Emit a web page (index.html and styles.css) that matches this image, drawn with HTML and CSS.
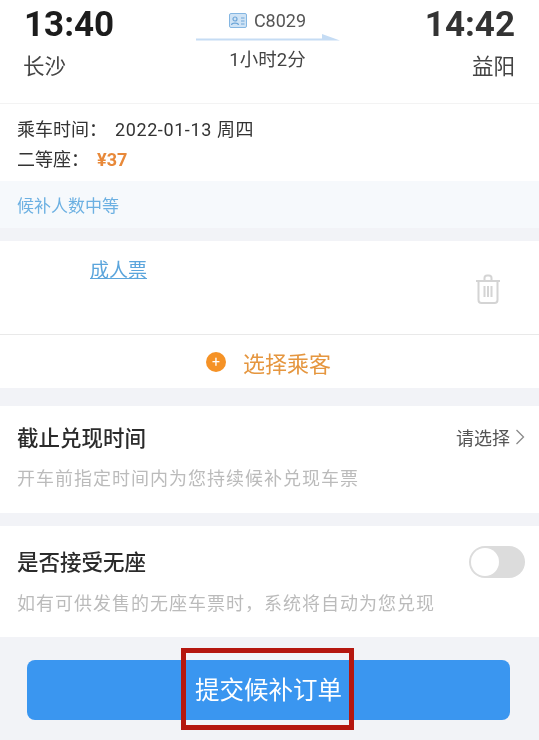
FILE: index.html
```html
<!DOCTYPE html>
<html lang="zh">
<head>
<meta charset="utf-8">
<title>提交候补订单</title>
<link rel="stylesheet" href="styles.css">
</head>
<body>
<main class="page">
  <section class="trip">
    <div class="stop">
      <div class="time">13:40</div>
      <div class="city">长沙</div>
    </div>
    <div class="route">
      <div class="train">
        <svg class="train-icon" viewBox="0 0 18 15" aria-hidden="true">
          <rect x="0.5" y="0.5" width="17" height="14" rx="1.5" fill="#cfe3f5" stroke="#84b6e2"/>
          <circle cx="6" cy="6" r="2" fill="none" stroke="#6ea6d8" stroke-width="1.2"/>
          <path d="M2.5 12c.4-2.4 6.6-2.4 7 0" fill="none" stroke="#6ea6d8" stroke-width="1.2"/>
          <path d="M12 5h3.5M12 8h3.5M12 11h3.5" stroke="#6ea6d8" stroke-width="1.1"/>
        </svg>
        <span>C8029</span>
      </div>
      <svg class="arrow" viewBox="0 0 144 10" aria-hidden="true">
        <path d="M0 7.5h144L126 1v4.500H0z" fill="#c5dcf4"/>
      </svg>
      <div class="duration">1小时2分</div>
    </div>
    <div class="stop stop-end">
      <div class="time time-end">14:42</div>
      <div class="city">益阳</div>
    </div>
  </section>

  <section class="info">
    <p class="info-line">乘车时间：<span class="date">2022-01-13 周四</span></p>
    <p class="info-line">二等座：<span class="price">¥37</span></p>
  </section>
  <div class="notice">候补人数中等</div>

  <section class="passenger">
    <a class="ticket-type">成人票</a>
    <svg class="trash" viewBox="0 0 26 30" aria-hidden="true">
      <path d="M1 7h24M9.500 7V4a2.500 2.500 0 0 1 2.500-2.500h2A2.500 2.500 0 0 1 16.500 4v3M3.500 7v19a3 3 0 0 0 3 3h13a3 3 0 0 0 3-3V7M9.500 12v11M13 12v11M16.500 12v11" fill="none" stroke="#d4d4d4" stroke-width="2"/>
    </svg>
  </section>
  <section class="choose">
    <span class="plus">+</span>
    <span class="choose-text">选择乘客</span>
  </section>

  <section class="option option-deadline">
    <div class="option-head">
      <h2 class="option-title">截止兑现时间</h2>
      <div class="picker">
        <span>请选择</span>
        <svg class="chevron" viewBox="0 0 10 18" aria-hidden="true"><path d="M1.500 2l7 7-7 7" fill="none" stroke="#8a8a8a" stroke-width="1.300"/></svg>
      </div>
    </div>
    <p class="option-note">开车前指定时间内为您持续候补兑现车票</p>
  </section>

  <section class="option option-seat">
    <div class="option-head">
      <h2 class="option-title">是否接受无座</h2>
      <span class="toggle"><span class="knob"></span></span>
    </div>
    <p class="option-note">如有可供发售的无座车票时，系统将自动为您兑现</p>
  </section>

  <footer class="footer">
    <button class="submit" type="button">提交候补订单</button>
    <div class="mark"></div>
  </footer>
</main>
</body>
</html>
```
FILE: styles.css
```css
* { box-sizing: border-box; }
html, body { margin: 0; padding: 0; background: #f2f3f7; }
body {
  font-family: "Noto Sans CJK SC", "Roboto", sans-serif;
  color: #333;
  filter: blur(0.45px);
}
.page { width: 539px; height: 740px; overflow: hidden; position: relative; background: #f2f3f7; }
p, h2 { margin: 0; }

.trip {
  height: 104px;
  background: #fff;
  border-bottom: 1px solid #f3f3f3;
  padding: 0 24px;
  display: flex;
  justify-content: space-between;
}
.stop { width: 90px; display: flex; flex-direction: column; }
.stop-end { width: 94px; align-items: flex-end; }
.time {
  font-family: "Roboto", sans-serif;
  font-weight: 700;
  font-size: 35px;
  line-height: 30px;
  margin-top: 10px;
  color: #1c1c1c;
}
.time-end { color: #333; }
.city { font-size: 21.500px; line-height: 30px; margin-top: 10px; margin-left: -1px; color: #444; }
.route {
  width: 144px;
  display: flex;
  flex-direction: column;
  align-items: center;
}
.train {
  display: flex;
  align-items: center;
  gap: 7px;
  margin-top: 11px;
  height: 18px;
  font-family: "Roboto", sans-serif;
  font-size: 18px;
  color: #555;
}
.train-icon { width: 18px; height: 15px; }
.arrow { width: 144px; height: 10px; margin-top: 4px; display: block; }
.duration { font-size: 18.500px; line-height: 22px; margin-top: 6px; color: #444; font-family: "Roboto", "Noto Sans CJK SC", sans-serif; }

.info { height: 77px; background: #fff; padding: 9px 17px 0; }
.info-line { font-size: 18px; line-height: 30px; height: 30px; color: #333; }
.date { font-family: "Roboto", "Noto Sans CJK SC", sans-serif; font-size: 18px; letter-spacing: .6px; margin-left: 8px; line-height: 1; }
.price { font-family: "Roboto", sans-serif; font-weight: 700; color: #e8893a; font-size: 18px; margin-left: 8px; line-height: 1; }
.notice {
  height: 47px;
  background: #f6f9fc;
  padding-left: 17px;
  display: flex;
  align-items: center;
  font-size: 17px;
  color: #6cb0e2;
}

.passenger {
  height: 94px;
  margin-top: 13px;
  background: #fff;
  border-bottom: 1px solid #e9e9e9;
  padding: 15px 38px 0 90px;
  display: flex;
  justify-content: space-between;
  align-items: flex-start;
}
.ticket-type { font-size: 19px; line-height: 26px; color: #5ba5dc; text-decoration: underline; }
.trash { width: 26px; height: 30px; margin-top: 18px; }
.choose {
  height: 53px;
  background: #fff;
  display: flex;
  align-items: center;
  padding-left: 206px;
}
.plus {
  width: 20px;
  height: 20px;
  border-radius: 50%;
  background: #f59226;
  color: #fff;
  font: 400 14px/20px "Roboto", sans-serif;
  text-align: center;
}
.choose-text { margin-left: 17px; font-size: 22px; color: #e5963f; }

.option { background: #fff; padding: 0 14px 0 17px; }
.option-deadline { height: 107px; margin-top: 18px; }
.option-seat { height: 111px; margin-top: 13px; }
.option-head { display: flex; justify-content: space-between; align-items: center; }
.option-deadline .option-head { padding-top: 15px; height: 47px; }
.option-seat .option-head { padding-top: 20px; height: 52px; }
.option-title { font-size: 21.500px; font-weight: 500; line-height: 32px; color: #2b2b2b; }
.option-seat .option-title { margin-top: -3px; }
.picker { display: flex; align-items: center; gap: 5px; font-size: 18px; color: #555; }
.chevron { width: 10px; height: 18px; }
.option-note { font-size: 18px; letter-spacing: 1px; line-height: 28px; color: #bbbbbb; margin-top: 10px; }

.toggle {
  width: 56px;
  height: 32px;
  border-radius: 16px;
  background: #dcdcdc;
  display: block;
  padding: 2px;
}
.knob { display: block; width: 28px; height: 28px; border-radius: 50%; background: #fff; }

.footer { padding: 23px 29px 0 27px; }
.submit {
  width: 483px;
  height: 60px;
  display: block;
  border: 0;
  border-radius: 8px;
  background: #3a96f0;
  color: #fff;
  font-family: "Noto Sans CJK SC", sans-serif;
  font-size: 24.500px;
  padding: 0 0 4px;
}
.mark {
  position: absolute;
  left: 181px;
  top: 648px;
  width: 173px;
  height: 82px;
  border: 5px solid #b5170f;
}
```
